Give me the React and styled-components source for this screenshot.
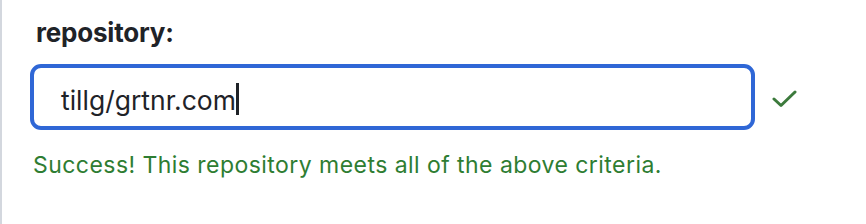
import React from "react";
import styled, { createGlobalStyle } from "styled-components";

const Global = createGlobalStyle`
  html, body { margin: 0; padding: 0; background: #ffffff; }
  body { font-family: Inter, "Noto Sans", sans-serif; }
`;

const Page = styled.div`
  width: 866px;
  height: 224px;
  box-sizing: border-box;
  border-left: 2px solid #d3d7de;
  padding: 17px 0 0 25px;
  display: flex;
  flex-direction: column;
`;

const Label = styled.label`
  font-size: 26px;
  font-weight: 700;
  color: #1f2328;
  margin-left: 9px;
  line-height: 32px;
  letter-spacing: -0.2px;
`;

const Row = styled.div`
  display: flex;
  align-items: center;
  gap: 17px;
  margin-top: 15px;
`;

const Input = styled.div`
  width: 725px;
  height: 66px;
  box-sizing: border-box;
  border: 4.5px solid #2f67d6;
  border-radius: 11px;
  margin-left: 3px;
  padding: 5px 0 0 27px;
  display: flex;
  align-items: center;
  font-size: 26.5px;
  color: #1f2328;
`;

const Caret = styled.span`
  display: inline-block;
  width: 3px;
  height: 32px;
  background: #1f2328;
  margin-top: -2px;
`;

const Check = styled.svg`
  margin-top: 3px;
`;

const Message = styled.div`
  margin-top: 22px;
  margin-left: 6px;
  font-size: 23px;
  line-height: 26px;
  letter-spacing: 0.45px;
  color: #2e7d32;
`;

export default function App() {
  return (
    <Page>
      <Global />
      <Label>repository:</Label>
      <Row>
        <Input>
          tillg/grtnr.com<Caret />
        </Input>
        <Check width="26" height="20" viewBox="0 0 26 20">
          <path d="M2 10 L9 16.5 L23 3" fill="none" stroke="#3c7a3c" strokeWidth="3" strokeLinecap="round" strokeLinejoin="round" />
        </Check>
      </Row>
      <Message>Success! This repository meets all of the above criteria.</Message>
    </Page>
  );
}
